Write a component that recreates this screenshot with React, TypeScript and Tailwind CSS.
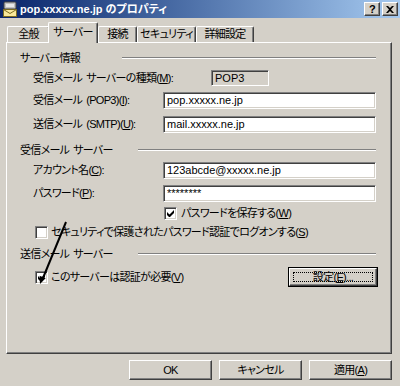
import React from "react";

const FONT = "font-['Liberation_Sans','Noto_Sans_CJK_JP',sans-serif] [font-feature-settings:'palt']";

function Raised({ className = "", children }: { className?: string; children?: React.ReactNode }) {
  return (
    <div
      className={`flex items-center justify-center border border-t-white border-l-white border-r-[#404040] border-b-[#404040] shadow-[inset_-1px_-1px_#808080] bg-[#d4d0c8] ${className}`}
    >
      {children}
    </div>
  );
}

function Sunken({ className = "", children }: { className?: string; children?: React.ReactNode }) {
  return (
    <div
      className={`flex items-center border border-t-[#808080] border-l-[#808080] border-r-white border-b-white shadow-[inset_1px_1px_#404040,inset_-1px_-1px_#d4d0c8] ${className}`}
    >
      {children}
    </div>
  );
}

function Field({ value }: { value: string }) {
  return (
    <Sunken className="w-[213px] h-[17px] bg-white pl-[3px]">
      <span className="text-[11px] leading-none tracking-normal text-black">{value}</span>
    </Sunken>
  );
}

function Check({ on }: { on?: boolean }) {
  return (
    <Sunken className="w-[13px] h-[13px] bg-white shrink-0 justify-center">
      {on && (
        <svg width="7" height="7" viewBox="0 0 7 7">
          <path d="M0 2v3l2 2h1l4-4V0L2.5 4.5z" fill="black" />
        </svg>
      )}
    </Sunken>
  );
}

const Sp = () => <span className="inline-block w-[4px]" />;

function GroupHead({ children, w }: { children: React.ReactNode; w: string }) {
  return (
    <div className="flex items-center h-[14px] pl-[13px] pr-[15px]">
      <span className={`${w} shrink-0`}>{children}</span>
      <div className="flex-1 h-[2px] border-t border-t-[#808080] border-b border-b-white" />
    </div>
  );
}

function Tab({ label, w, active }: { label: string; w: string; active?: boolean }) {
  if (active) {
    return (
      <div
        className={`${w} -ml-[2px] h-[21px] -mb-[1px] z-10 relative flex items-start justify-center pt-[4px] whitespace-nowrap bg-[#d4d0c8] border-t border-l border-r border-t-white border-l-white border-r-[#404040] shadow-[inset_-1px_0_#808080] rounded-t-[2px]`}
      >
        {label}
      </div>
    );
  }
  return (
    <div
      className={`${w} h-[16px] flex items-start justify-center pt-[2px] whitespace-nowrap border-t border-l border-r border-t-white border-l-white border-r-[#404040] shadow-[inset_-1px_0_#808080] rounded-t-[2px]`}
    >
      {label}
    </div>
  );
}

export default function App() {
  return (
    <div
      className={`w-[400px] h-[386px] bg-[#d4d0c8] relative overflow-hidden text-[11px] tracking-[-0.7px] text-black leading-none ${FONT}`}
    >
      {/* title bar */}
      <div className="h-[18px] flex items-center bg-gradient-to-r from-[#0a246a] to-[#a6caf0] pl-[2px] pr-[2px]">
        <svg width="16" height="16" viewBox="0 0 16 16" className="shrink-0">
          <rect x="2" y="1" width="12" height="7" rx="1" fill="#c0c0c0" stroke="#404040" strokeWidth="1" />
          <rect x="4" y="3" width="8" height="3" fill="#e8e8e8" />
          <rect x="1.5" y="8.5" width="13" height="7" fill="#f8e89a" stroke="#7a6a20" />
          <path d="M1.5 8.5l6.5 4 6.5-4" fill="none" stroke="#7a6a20" />
        </svg>
        <span className="ml-[2px] text-white font-bold text-[11px] tracking-normal">pop.xxxxx.ne.jp のプロパティ</span>
        <div className="flex-1" />
        <Raised className="w-[16px] h-[14px] text-[11px] font-bold">?</Raised>
        <Raised className="w-[16px] h-[14px] ml-[2px]">
          <svg width="8" height="7" viewBox="0 0 8 7">
            <path d="M0 0h2l2 2 2-2h2L5 3.5 8 7H6L4 5 2 7H0l3-3.5z" fill="black" />
          </svg>
        </Raised>
      </div>

      {/* tabs */}
      <div className="h-[24px] flex items-end pl-[7px]">
        <Tab label="全般" w="w-[43px]" />
        <Tab label="サーバー" w="w-[50px]" active />
        <Tab label="接続" w="w-[39px]" />
        <Tab label="セキュリティ" w="w-[59px]" />
        <Tab label="詳細設定" w="w-[58px]" />
      </div>

      {/* panel */}
      <div className="ml-[6px] w-[386px] h-[312px] flex flex-col border border-t-white border-l-white border-r-[#404040] border-b-[#404040] shadow-[inset_-1px_-1px_#808080]">
        <div className="mt-[8px]">
          <GroupHead w="w-[102px]">サーバー情報</GroupHead>
        </div>
        <div className="mt-[5px] h-[16px] flex items-center pl-[26px]">
          <span className="w-[178px]">
            受信メール<Sp />サーバーの種類(<u>M</u>):
          </span>
          <Sunken className="w-[58px] h-[16px] pl-[3px]">
            <span className="text-[11px] tracking-normal">POP3</span>
          </Sunken>
        </div>
        <div className="mt-[6px] h-[17px] flex items-center pl-[26px]">
          <span className="w-[130px]">
            受信メール<Sp />(POP3)(<u>I</u>):
          </span>
          <Field value="pop.xxxxx.ne.jp" />
        </div>
        <div className="mt-[7px] h-[17px] flex items-center pl-[26px]">
          <span className="w-[130px]">
            送信メール<Sp />(SMTP)(<u>U</u>):
          </span>
          <Field value="mail.xxxxx.ne.jp" />
        </div>

        <div className="mt-[10px]">
          <GroupHead w="w-[118px]">
            受信メール<Sp />サーバー
          </GroupHead>
        </div>
        <div className="mt-[5px] h-[17px] flex items-center pl-[26px]">
          <span className="w-[130px]">
            アカウント名(<u>C</u>):
          </span>
          <Field value="123abcde@xxxxx.ne.jp" />
        </div>
        <div className="mt-[6px] h-[17px] flex items-center pl-[26px]">
          <span className="w-[130px]">
            パスワード(<u>P</u>):
          </span>
          <Field value="********" />
        </div>
        <div className="mt-[5px] h-[13px] flex items-center pl-[157px] gap-[4px]">
          <Check on />
          <span>
            パスワードを保存する(<u>W</u>)
          </span>
        </div>
        <div className="mt-[6px] h-[13px] flex items-center pl-[28px] gap-[3px]">
          <Check />
          <span>
            セキュリティで保護されたパスワード認証でログオンする(<u>S</u>)
          </span>
        </div>

        <div className="mt-[8px]">
          <GroupHead w="w-[118px]">
            送信メール<Sp />サーバー
          </GroupHead>
        </div>
        <div className="mt-[6px] h-[20px] flex items-center pl-[28px] pr-[13px]">
          <Check on />
          <span className="ml-[3px]">
            このサーバーは認証が必要(<u>V</u>)
          </span>
          <div className="flex-1" />
          <div className="w-[90px] h-[20px] border border-black">
            <Raised className="w-full h-full p-[3px]">
              <div className="w-full h-full flex items-center justify-center border border-dotted border-black">
                設定(<u>E</u>)...
              </div>
            </Raised>
          </div>
        </div>
      </div>

      {/* dialog buttons */}
      <div className="mt-[6px] flex justify-end gap-[7px] pr-[8px]">
        <Raised className="w-[83px] h-[20px]">OK</Raised>
        <Raised className="w-[83px] h-[20px]">キャンセル</Raised>
        <Raised className="w-[83px] h-[20px]">
          適用(<u>A</u>)
        </Raised>
      </div>

      {/* annotation arrow */}
      <svg width="400" height="386" className="absolute left-0 top-0 pointer-events-none">
        <line x1="66" y1="222" x2="43" y2="278" stroke="black" strokeWidth="2" />
        <polygon points="40,284 39.6,275.8 45.6,278.2" fill="black" />
      </svg>
    </div>
  );
}
